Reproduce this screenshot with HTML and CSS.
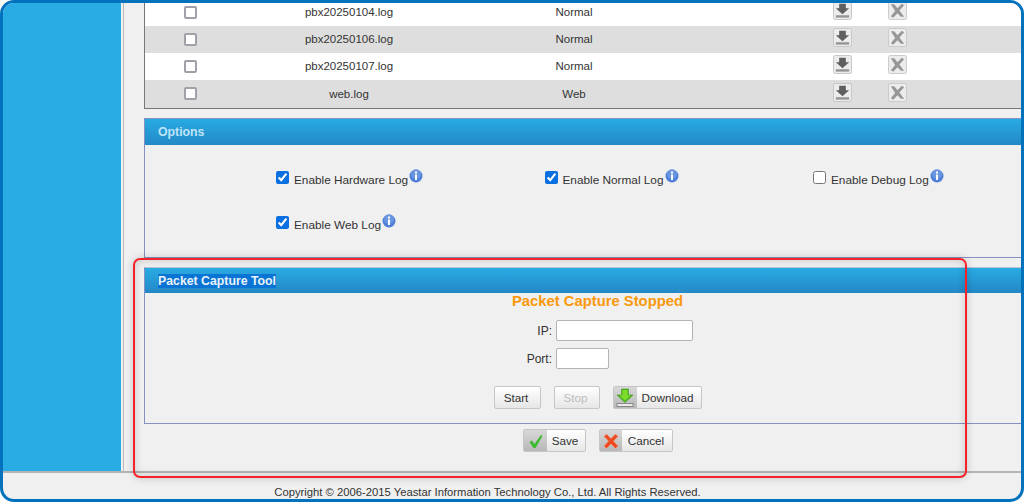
FILE: index.html
```html
<!DOCTYPE html>
<html lang="en">
<head>
<meta charset="utf-8">
<title>Log Settings</title>
<link rel="stylesheet" href="styles.css">
</head>
<body>
<svg class="defs" width="0" height="0" aria-hidden="true">
  <symbol id="dl" viewBox="0 0 20 20">
    <rect x="0.5" y="0.5" width="19" height="19" rx="2" fill="#ececec" stroke="#c4c4c4"/>
    <path d="M6.500 3h7v4.500H17l-7 6.500-7-6.500h3.500z" fill="#5f5f5f"/>
    <rect x="3" y="15" width="14" height="2.500" fill="#949494"/>
  </symbol>
  <symbol id="del" viewBox="0 0 20 20">
    <rect x="0.5" y="0.5" width="19" height="19" rx="2" fill="#ececec" stroke="#c8c8c8"/>
    <path d="M3 3.500h3.500l3.500 4 4.500-4.500 2.500 1.500-5 5.500 5 6.500h-3.500L10 13l-4.500 4.500L3 16l4.500-5.500z" fill="#979797"/>
  </symbol>
  <symbol id="info" viewBox="0 0 14 14">
    <circle cx="7" cy="7" r="6.500" fill="#4f7fd6"/>
    <circle cx="7" cy="5" r="5" fill="#7da3e6" opacity=".6"/>
    <rect x="6" y="2.500" width="2" height="2" fill="#fff"/>
    <rect x="6" y="5.500" width="2" height="5.500" fill="#fff"/>
  </symbol>
</svg>
<div class="frame">
  <div class="top">
    <aside class="sidebar"></aside>
    <main class="content">
      <div class="log-table">
        <div class="log-row"><span class="cell-check"><input class="plain-check" type="checkbox"></span><span>pbx20250104.log</span><span>Normal</span><span class="cell-actions"><svg class="act"><use href="#dl"/></svg><svg class="act"><use href="#del"/></svg></span></div>
        <div class="log-row alt"><span class="cell-check"><input class="plain-check" type="checkbox"></span><span>pbx20250106.log</span><span>Normal</span><span class="cell-actions"><svg class="act"><use href="#dl"/></svg><svg class="act"><use href="#del"/></svg></span></div>
        <div class="log-row"><span class="cell-check"><input class="plain-check" type="checkbox"></span><span>pbx20250107.log</span><span>Normal</span><span class="cell-actions"><svg class="act"><use href="#dl"/></svg><svg class="act"><use href="#del"/></svg></span></div>
        <div class="log-row alt"><span class="cell-check"><input class="plain-check" type="checkbox"></span><span>web.log</span><span>Web</span><span class="cell-actions"><svg class="act"><use href="#dl"/></svg><svg class="act"><use href="#del"/></svg></span></div>
      </div>

      <section class="panel options">
        <h2 class="panel-head"><span class="panel-title-dim">Options</span></h2>
        <div class="option-grid">
          <label class="opt"><input type="checkbox" checked>Enable Hardware Log<svg class="info"><use href="#info"/></svg></label>
          <label class="opt"><input type="checkbox" checked>Enable Normal Log<svg class="info"><use href="#info"/></svg></label>
          <label class="opt"><input type="checkbox">Enable Debug Log<svg class="info"><use href="#info"/></svg></label>
          <label class="opt"><input type="checkbox" checked>Enable Web Log<svg class="info"><use href="#info"/></svg></label>
        </div>
      </section>

      <section class="panel capture">
        <h2 class="panel-head"><span class="panel-title-sel">Packet Capture Tool</span></h2>
        <div class="capture-body">
          <p class="status">Packet Capture Stopped</p>
          <div class="field"><label class="field-label">IP:</label><input class="input-ip" type="text"></div>
          <div class="field"><label class="field-label">Port:</label><input class="input-port" type="text"></div>
          <div class="capture-actions">
            <button class="btn btn-start" type="button">Start</button>
            <button class="btn btn-stop" type="button">Stop</button>
            <button class="btn btn-icon btn-download" type="button"><span class="btn-glyph"><svg width="20" height="20" viewBox="0 0 20 20"><path d="M6.500 1h7v6H18l-8 7.500L2 7h4.500z" fill="#4fb81c" stroke="#3d9a12" stroke-width=".6"/><path d="M7.500 2h5v5.500h3L10 12.500 4.500 7.500h3z" fill="#7ddc2e"/><rect x="2" y="15.500" width="16" height="3" fill="#e8e8e8" stroke="#777" stroke-width=".8"/></svg></span><span class="btn-text">Download</span></button>
          </div>
        </div>
      </section>

      <div class="form-actions">
        <button class="btn btn-icon btn-save" type="button"><span class="btn-glyph"><svg width="18" height="18" viewBox="0 0 18 18"><path d="M2.500 10l2.500-1.500 2.500 3.500L14 3l1.500 1-7 12H6.500z" fill="#3dbb2e"/></svg></span><span class="btn-text">Save</span></button>
        <button class="btn btn-icon btn-cancel" type="button"><span class="btn-glyph"><svg width="18" height="18" viewBox="0 0 18 18"><path d="M2 4.500L4.500 2 9 6.500 13.500 2 16 4.500 11.500 9l4.500 5-2.500 2.500L9 12l-4.500 4.500L2 14l4.500-5z" fill="#ee4a22" stroke="#f7a08a" stroke-width=".6"/></svg></span><span class="btn-text">Cancel</span></button>
      </div>
    </main>
  </div>
  <footer class="footer">Copyright © 2006-2015 Yeastar Information Technology Co., Ltd. All Rights Reserved.</footer>
  <div class="highlight"></div>
</div>
</body>
</html>
```
FILE: styles.css
```css
* { box-sizing: border-box; }
html, body { margin: 0; padding: 0; height: 100%; overflow: hidden; background: #fff; }
body { font-family: "Liberation Sans", Arial, sans-serif; font-size: 12px; color: #333; }
.defs { position: absolute; }

.frame {
  position: relative;
  height: 502px;
  border: 3px solid #0272bd;
  border-radius: 14px;
  background: #f0f0f0;
  overflow: hidden;
  display: flex;
  flex-direction: column;
}
.top { display: flex; height: 470px; flex: none; border-bottom: 2px solid #b4b4b4; }
.sidebar { width: 118px; flex: none; background: #29abe3; }
.content {
  flex: 1;
  min-width: 0;
  overflow: hidden;
  margin-left: 2px;
  border-left: 1px solid #b9b9b9;
  padding-left: 20px;
}

.log-table {
  width: 920px;
  margin-top: -4px;
  border: 1px solid #777;
  border-top: 0;
  background: #fff;
  font-size: 11.5px;
}
.log-row {
  display: grid;
  grid-template-columns: 90px 228px 222px 1fr;
  align-items: center;
  height: 27px;
  padding-bottom: 1px;
  text-align: center;
}
.log-row:last-child { height: 28px; }
.log-row.alt { background: #dedede; }
.cell-check { display: flex; justify-content: center; }
.plain-check {
  appearance: none;
  width: 13px;
  height: 13px;
  margin: 0;
  background: #fff;
  border: 2px solid #a0a0a8;
  border-radius: 2px;
}
.cell-actions { display: flex; gap: 36px; padding-left: 148px; margin-top: -3px; }
.act { width: 19px; height: 19px; }

.panel { width: 920px; border: 1px solid #8591c2; }
.panel-head {
  margin: 0;
  height: 26px;
  padding-left: 13px;
  display: flex;
  align-items: center;
  font-size: 12.3px;
  font-weight: bold;
  background: linear-gradient(#29abe3, #2388c6);
}
.panel-title-dim { color: #bfe4f8; }
.panel-title-sel { color: #e9f3fb; background: #0a74d4; }

.options { margin-top: 9px; height: 140px; }
.option-grid {
  display: grid;
  grid-template-columns: repeat(3, 268.500px);
  grid-auto-rows: 44.500px;
  padding: 24px 0 0 131px;
  font-size: 11.8px;
}
.opt { display: flex; align-items: flex-start; height: 20px; line-height: 16px; padding-top: 3px; }
.opt input { width: 13px; height: 13px; margin: -1px 5px 0 0; accent-color: #0a6fe0; }
.info { width: 14px; height: 14px; margin-top: -3px; margin-left: 1px; }

.capture { margin-top: 9px; height: 157px; border-top-color: #b9c2d8; }
.capture .panel-head { height: 25px; }
.capture-body { display: flex; flex-direction: column; align-items: center; padding-right: 13px; }
.status { margin: 0; font-size: 14.800px; line-height: 16px; font-weight: bold; color: #f9990c; }
.field { display: flex; align-items: center; width: 205px; height: 21px; margin-right: 14px; gap: 4px; }
.field + .field { margin-top: 7px; }
.status + .field { margin-top: 11px; }
.field-label { width: 64px; text-align: right; }
.input-ip, .input-port { height: 21px; padding: 0; background: #fff; border: 1px solid #b3b3b3; border-radius: 2px; }
.input-ip { width: 137px; }
.input-port { width: 53px; }

.btn {
  height: 23px;
  padding: 0 2px 0 0;
  font: 11.700px "Liberation Sans", Arial, sans-serif;
  color: #333;
  background: linear-gradient(#fff, #e6e6e6);
  border: 1px solid #c6c6c6;
  border-radius: 2px;
}
.btn-icon { display: inline-flex; align-items: stretch; }
.btn-glyph {
  display: flex;
  align-items: center;
  justify-content: center;
  background: linear-gradient(#d8d8d8, #b8b8b8);
}
.btn-text { flex: 1; align-self: center; }

.capture-actions { display: flex; gap: 13px; margin-top: 17px; }
.btn-start { width: 47px; }
.btn-stop { width: 46px; color: #bdbdbd; }
.btn-download { width: 89px; }
.btn-download .btn-glyph { width: 23px; }
.btn-save { width: 63px; }
.btn-save .btn-glyph { width: 23px; }
.btn-cancel { width: 74px; }
.btn-cancel .btn-glyph { width: 22px; }

.form-actions { display: flex; gap: 13px; margin: 5px 0 0 379px; }

.footer { flex: 1; padding: 12px 49px 0 0; text-align: center; font-size: 11.250px; line-height: 14px; }

.highlight {
  position: absolute;
  left: 130px;
  top: 255px;
  width: 834px;
  height: 220px;
  border: 2px solid #f5222a;
  border-radius: 7px;
  box-shadow: 0 0 8px rgba(0, 0, 0, .18), inset 0 0 8px rgba(0, 0, 0, .18);
}
```
